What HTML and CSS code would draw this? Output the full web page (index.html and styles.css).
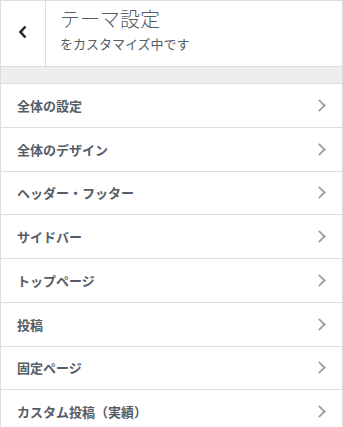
FILE: index.html
```html
<!DOCTYPE html>
<html lang="ja">
<head>
    <meta charset="UTF-8">
    <meta name="viewport" content="width=device-width, initial-scale=1.0">
    <title>テーマ設定</title>
    <link rel="stylesheet" href="styles.css">
</head>
<body>
    <div class="panel">
        <div class="panel-header">
            <button type="button" class="back-button" aria-label="戻る">
                <svg width="10" height="14" viewBox="0 0 10 14">
                    <path d="M7.5 1.5 L2.5 7 L7.5 12.5" fill="none" stroke="#23282d" stroke-width="2.6"/>
                </svg>
            </button>
            <div class="panel-title">
                <h1>テーマ設定</h1>
                <p>をカスタマイズ中です</p>
            </div>
        </div>

        <div class="panel-spacer"></div>

        <ul class="section-list">
            <li class="section-item">全体の設定<span class="chevron"></span></li>
            <li class="section-item">全体のデザイン<span class="chevron"></span></li>
            <li class="section-item">ヘッダー・フッター<span class="chevron"></span></li>
            <li class="section-item">サイドバー<span class="chevron"></span></li>
            <li class="section-item">トップページ<span class="chevron"></span></li>
            <li class="section-item">投稿<span class="chevron"></span></li>
            <li class="section-item">固定ページ<span class="chevron"></span></li>
            <li class="section-item">カスタム投稿（実績）<span class="chevron"></span></li>
        </ul>
    </div>
</body>
</html>
```

FILE: styles.css
```css
body {
    margin: 0;
    padding: 0;
    background-color: #fff;
    font-family: 'Noto Sans CJK JP', 'Noto Sans', sans-serif;
    color: #555d66;
}

.panel {
    width: 343px;
    box-sizing: border-box;
    border-left: 1px solid #ddd;
    border-right: 1px solid #ddd;
}

.panel-header {
    display: flex;
    height: 67px;
    box-sizing: border-box;
    border-top: 1px solid #ddd;
    border-bottom: 1px solid #ddd;
    background-color: #fff;
}

.back-button {
    width: 45px;
    flex-shrink: 0;
    display: flex;
    align-items: center;
    justify-content: center;
    padding: 0 0 4px 0;
    background: #fff;
    border: none;
    border-right: 1px solid #ddd;
    cursor: pointer;
}

.panel-title {
    padding: 4px 0 0 14px;
}

.panel-title h1 {
    margin: 0;
    font-size: 20px;
    font-weight: 300;
    line-height: 28px;
    color: #555d66;
}

.panel-title p {
    margin: 2px 0 0 0;
    font-size: 13px;
    line-height: 18px;
    color: #555d66;
}

.panel-spacer {
    height: 16px;
    background-color: #eee;
}

.section-list {
    list-style: none;
    margin: 0;
    padding: 0;
    border-top: 1px solid #ddd;
}

.section-item {
    display: flex;
    align-items: center;
    justify-content: space-between;
    height: 43.75px;
    box-sizing: border-box;
    padding: 0 14px 0 16px;
    border-bottom: 1px solid #ddd;
    font-size: 13px;
    font-weight: 700;
    color: #555d66;
}

.chevron {
    width: 7px;
    height: 7px;
    margin-right: 4px;
    border-top: 2px solid #a0a5aa;
    border-right: 2px solid #a0a5aa;
    transform: rotate(45deg);
}
```
